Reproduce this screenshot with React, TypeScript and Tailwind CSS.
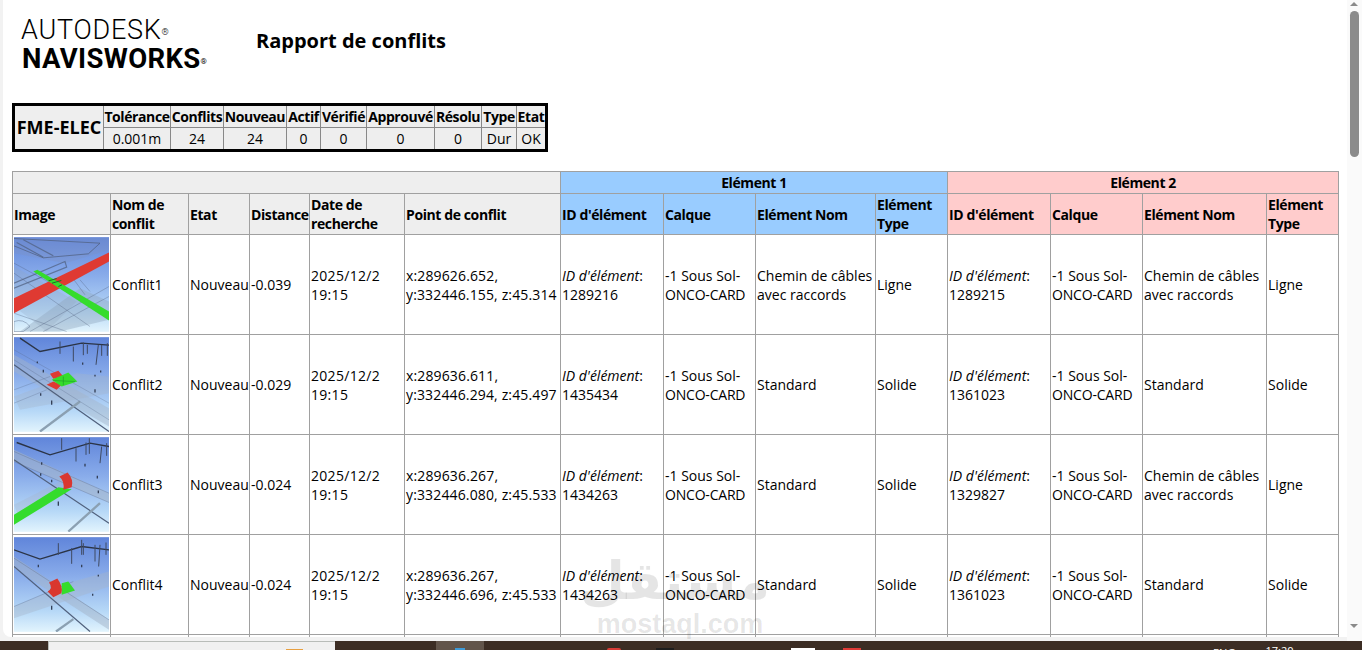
import React from 'react';

const summaryHeads = ['Tolérance', 'Conflits', 'Nouveau', 'Actif', 'Vérifié', 'Approuvé', 'Résolu', 'Type', 'Etat'];
const summaryVals = ['0.001m', '24', '24', '0', '0', '0', '0', 'Dur', 'OK'];
const summaryWidths = [67, 53, 63, 34, 46, 68, 47, 35, 30];

const colWidths = [98, 78, 61, 60, 95, 156, 103, 92, 120, 72, 103, 92, 124, 72];

const subHeads = ['ID d\'élément', 'Calque', 'Elément Nom'];

const rows = [
  {
    name: 'Conflit1', dist: '-0.039', coords: ['x:289626.652,', 'y:332446.155, z:45.314'],
    a: { id: '1289216', nom: ['Chemin de câbles', 'avec raccords'], type: 'Ligne' },
    b: { id: '1289215', nom: ['Chemin de câbles', 'avec raccords'], type: 'Ligne' },
  },
  {
    name: 'Conflit2', dist: '-0.029', coords: ['x:289636.611,', 'y:332446.294, z:45.497'],
    a: { id: '1435434', nom: ['Standard'], type: 'Solide' },
    b: { id: '1361023', nom: ['Standard'], type: 'Solide' },
  },
  {
    name: 'Conflit3', dist: '-0.024', coords: ['x:289636.267,', 'y:332446.080, z:45.533'],
    a: { id: '1434263', nom: ['Standard'], type: 'Solide' },
    b: { id: '1329827', nom: ['Chemin de câbles', 'avec raccords'], type: 'Ligne' },
  },
  {
    name: 'Conflit4', dist: '-0.024', coords: ['x:289636.267,', 'y:332446.696, z:45.533'],
    a: { id: '1434263', nom: ['Standard'], type: 'Solide' },
    b: { id: '1361023', nom: ['Standard'], type: 'Solide' },
  },
];

const Thumb = ({ view, children }: { view: string; children: React.ReactNode }) => {
  const [x, y, w, h] = view.split(' ').map(Number);
  return (
    <svg viewBox={view} width={95} height={95} className="block">
      <defs>
        <linearGradient id="sky" x1="0" y1="0" x2="0" y2="1">
          <stop offset="0" stopColor="#6085da" />
          <stop offset="0.4" stopColor="#88abea" />
          <stop offset="0.78" stopColor="#b6d8f7" />
          <stop offset="1" stopColor="#e2f4fd" />
        </linearGradient>
      </defs>
      <rect x={x} y={y} width={w} height={h} fill="url(#sky)" />
      {children}
    </svg>
  );
};

const Conflict1 = () => (
  <Thumb view="42 22 285 284">
    <path d="M42 24 H327 V60 L195 100 L42 70 Z" fill="#7e93c4" fillOpacity="0.35" />
    <path d="M60 305 L240 175 L327 215 L327 270 L180 305 Z" fill="#8ea4bc" fillOpacity="0.4" />
    <path d="M42 110 L230 215 L140 305 L42 230 Z" fill="#8ea4bc" fillOpacity="0.25" />
    <g fill="none" stroke="#4f5e7c" strokeOpacity="0.7">
      <path d="M42 26 L300 40 L265 72 L130 84 L42 48" strokeWidth="3" />
      <path d="M50 38 L130 82 M70 30 L160 78 M42 160 L195 95 L200 112 L42 175" strokeWidth="3.5" />
      <path d="M42 100 L300 240 M42 130 L270 290 M90 305 L327 170 M130 305 L327 200 M240 150 L270 185 M222 150 L255 195 M42 250 L200 305" strokeWidth="2" strokeOpacity="0.5" />
      <path d="M42 275 Q70 265 90 290 L70 305 L42 305 Z" strokeWidth="2" strokeOpacity="0.6" />
    </g>
    <path d="M42 205 L327 68 L327 95 L42 250 Z" fill="#df3a32" />
    <path d="M100 125 L112 120 L327 245 L327 272 Z" fill="#35dc2c" />
    <path d="M146 153 L170 146 M156 160 L184 152 M175 170 L186 165" stroke="#1c6e2a" strokeWidth="3" />
  </Thumb>
);

const Conflict2 = () => (
  <Thumb view="42 322 285 284">
    <path d="M42 375 L327 535 L327 590 L42 425 Z" fill="#a4b4c8" fillOpacity="0.45" />
    <path d="M42 500 L230 430 L327 440 L327 490 L60 540 Z" fill="#a4b4c8" fillOpacity="0.35" />
    <g fill="none">
      <path d="M42 405 L327 605" stroke="#50607c" strokeWidth="3.5" />
      <path d="M120 605 L240 515" stroke="#8ba0b2" strokeWidth="7" />
      <path d="M42 360 L327 520 M42 390 L327 570 M42 480 L150 440 M42 520 L140 480" stroke="#4f5e7c" strokeOpacity="0.4" strokeWidth="2" />
      <path d="M60 325 L120 365 L245 340 L327 346" stroke="#2b3446" strokeWidth="4" />
      <path d="M180 335 V372 M220 350 V395 M250 338 V376 M262 345 V372 M295 345 L288 405 M305 345 V378 M322 340 V378" stroke="#3f4a62" strokeWidth="3" />
      <path d="M130 420 V428 M155 512 V525 M122 490 V498 M285 478 V488 M248 398 V405 M285 435 V440 M302 422 V428 M112 395 V400" stroke="#333f57" strokeWidth="4" />
    </g>
    <path d="M150 432 L175 423 L190 440 L160 447 Z M140 465 L160 455 L185 465 L170 480 Z" fill="#df3a32" />
    <path d="M155 450 L205 428 L232 455 L185 470 Z" fill="#35dc2c" />
    <path d="M160 452 L225 455 M190 440 L190 466" stroke="#198a28" strokeWidth="1.5" />
  </Thumb>
);

const Conflict3 = () => (
  <Thumb view="42 22 285 284">
    <path d="M42 60 L327 190 L327 218 L42 95 Z" fill="#a4b4c8" fillOpacity="0.55" />
    <path d="M42 225 L190 150 L230 165 L60 270 Z" fill="#a4b4c8" fillOpacity="0.3" />
    <g fill="none">
      <path d="M42 90 L327 280" stroke="#50607c" strokeWidth="3.5" />
      <path d="M205 305 L300 220" stroke="#8ba0b2" strokeWidth="7" />
      <path d="M42 65 L327 190 M42 95 L327 218" stroke="#4f5e7c" strokeOpacity="0.45" strokeWidth="2" />
      <path d="M50 38 L150 75 L270 40 L327 50" stroke="#2b3446" strokeWidth="4" />
      <path d="M185 25 V60 M228 55 V95 M258 38 V75 M268 25 V72 M305 50 L300 100 M320 40 V78" stroke="#3f4a62" strokeWidth="3" />
      <path d="M125 97 V105 M122 130 V138 M155 150 V157 M175 215 V228 M292 138 V146 M295 182 V190 M255 102 V110" stroke="#333f57" strokeWidth="4" />
    </g>
    <path d="M42 255 L175 172 L215 178 L42 285 Z" fill="#35dc2c" />
    <path d="M178 140 L203 128 Q222 150 215 172 L190 180 Q195 155 178 140 Z" fill="#d9372f" />
  </Thumb>
);

const Conflict4 = () => (
  <Thumb view="42 322 285 284">
    <path d="M42 380 L327 570 L327 600 L42 415 Z" fill="#a4b4c8" fillOpacity="0.5" />
    <path d="M42 530 L220 455 L327 425 L327 470 L42 565 Z" fill="#a4b4c8" fillOpacity="0.4" />
    <g fill="none">
      <path d="M42 410 L270 605" stroke="#50607c" strokeWidth="3.5" />
      <path d="M168 605 L220 568" stroke="#8ba0b2" strokeWidth="7" />
      <path d="M42 385 L327 570 M42 530 L220 455" stroke="#4f5e7c" strokeOpacity="0.45" strokeWidth="2" />
      <path d="M42 360 L120 388 L245 350 L327 360" stroke="#2b3446" strokeWidth="4" />
      <path d="M175 340 V375 M215 355 V402 M250 340 V375 M285 345 V395 M300 345 L296 410 M318 338 V375 M245 330 V375" stroke="#3f4a62" strokeWidth="3" />
      <path d="M115 405 V412 M155 528 V540 M295 435 V440 M278 492 V498 M245 405 V412" stroke="#333f57" strokeWidth="4" />
    </g>
    <path d="M185 460 L205 455 L225 482 L185 495 Z" fill="#35dc2c" />
    <path d="M147 458 L172 446 Q190 470 184 490 L160 502 L143 485 Q160 475 147 458 Z" fill="#d9372f" />
  </Thumb>
);

const thumbs = [Conflict1, Conflict2, Conflict3, Conflict4];

const Line = ({ lines }: { lines: string[] }) => (
  <>
    {lines.map((l) => (
      <div key={l}>{l}</div>
    ))}
  </>
);

const cell = 'border border-[#a0a0a0] px-[1px] py-0 align-middle text-left font-normal';
const head = 'border border-[#a0a0a0] px-[1px] py-0 align-middle text-left font-bold tracking-[-0.4px]';

const ElementCells = ({ el }: { el: { id: string; nom: string[]; type: string } }) => (
  <>
    <td className={cell}>
      <div><i>ID d'élément</i>:</div>
      <div>{el.id}</div>
    </td>
    <td className={cell}>
      <div>-1 Sous Sol-</div>
      <div className="tracking-[-0.2px]">ONCO-CARD</div>
    </td>
    <td className={cell}><Line lines={el.nom} /></td>
    <td className={cell}>{el.type}</td>
  </>
);

const Report = () => (
  <div className="h-full overflow-hidden">
    <div className="flex h-[103px] items-start">
      <div className="ml-[18px] mt-[16px] w-[235px] text-black">
        <div className="font-['Roboto',sans-serif] text-[27px] font-light leading-[28px] tracking-[0.75px]">AUTODESK<sup className="text-[9px]">®</sup></div>
        <div className="ml-[1px] font-['Roboto',sans-serif] text-[27.5px] font-bold leading-[30px] tracking-[0.35px]">NAVISWORKS<sup className="text-[8px] font-normal">®</sup></div>
      </div>
      <h1 className="mt-[27px] text-[20px] font-bold leading-[28px] text-black">Rapport de conflits</h1>
    </div>

    <table className="ml-[9px] w-[533px] table-fixed border-collapse border-[3px] border-black bg-[#eeeeee] text-[14px] leading-[19px] text-black">
      <colgroup>
        <col className="w-[90px]" />
        {summaryWidths.map((w, i) => (
          <col key={i} style={{ width: w }} />
        ))}
      </colgroup>
      <tbody>
        <tr className="h-[23px]">
          <th rowSpan={2} className="overflow-hidden whitespace-nowrap border border-[#888888] p-0 text-center text-[18px] font-bold">FME-ELEC</th>
          {summaryHeads.map((h) => (
            <th key={h} className="border border-[#888888] p-0 text-center font-bold tracking-[-0.4px]">{h}</th>
          ))}
        </tr>
        <tr className="h-[23px]">
          {summaryVals.map((v, i) => (
            <td key={i} className="border border-[#888888] p-0 text-center">{v}</td>
          ))}
        </tr>
      </tbody>
    </table>

    <table className="ml-[9px] mt-[19px] w-[1327px] table-fixed border-collapse text-[14px] leading-[19px] text-black">
      <colgroup>
        {colWidths.map((w, i) => (
          <col key={i} style={{ width: w }} />
        ))}
      </colgroup>
      <thead>
        <tr className="h-[22px]">
          <th colSpan={6} className={`${head} bg-[#eeeeee]`} />
          <th colSpan={4} className={`${head} bg-[#99ccff] text-center!`}>Elément 1</th>
          <th colSpan={4} className={`${head} bg-[#ffcccc] text-center!`}>Elément 2</th>
        </tr>
        <tr className="h-[41px]">
          <th className={`${head} bg-[#eeeeee]`}>Image</th>
          <th className={`${head} bg-[#eeeeee]`}>Nom de conflit</th>
          <th className={`${head} bg-[#eeeeee]`}>Etat</th>
          <th className={`${head} bg-[#eeeeee]`}>Distance</th>
          <th className={`${head} bg-[#eeeeee]`}>Date de recherche</th>
          <th className={`${head} bg-[#eeeeee]`}>Point de conflit</th>
          {subHeads.map((h) => (
            <th key={h} className={`${head} bg-[#99ccff]`}>{h}</th>
          ))}
          <th className={`${head} bg-[#99ccff]`}>Elément Type</th>
          {subHeads.map((h) => (
            <th key={h} className={`${head} bg-[#ffcccc]`}>{h}</th>
          ))}
          <th className={`${head} bg-[#ffcccc]`}>Elément Type</th>
        </tr>
      </thead>
      <tbody>
        {rows.map((r, i) => {
          const Pic = thumbs[i];
          return (
            <tr key={r.name} className="h-[100px]">
              <td className={cell}><Pic /></td>
              <td className={cell}>{r.name}</td>
              <td className={cell}>Nouveau</td>
              <td className={cell}>{r.dist}</td>
              <td className={`${cell} tracking-[0.3px]`}>
                <div>2025/12/2</div>
                <div>19:15</div>
              </td>
              <td className={`${cell} tracking-[0.14px]`}><Line lines={r.coords} /></td>
              <ElementCells el={r.a} />
              <ElementCells el={r.b} />
            </tr>
          );
        })}
        <tr className="h-[100px]">
          {colWidths.map((_, i) => (
            <td key={i} className={cell} />
          ))}
        </tr>
      </tbody>
    </table>
  </div>
);

const Scrollbar = () => (
  <div className="flex w-[15px] flex-col items-center bg-[#fafafa] pb-[12px] pr-[1px]">
    <svg width="10" height="6" viewBox="0 0 10 6" className="mt-[1px]"><path d="M5 1 L9 5 H1 Z" fill="#8a8a8a" /></svg>
    <div className="mt-[4px] h-[146px] w-[9px] rounded-full bg-[#8b8b8b]" />
    <div className="flex-1" />
    <svg width="10" height="6" viewBox="0 0 10 6"><path d="M5 5 L9 1 H1 Z" fill="#8a8a8a" /></svg>
  </div>
);

const Taskbar = () => (
  <div className="flex h-[9px] items-start overflow-hidden bg-[#3c2d24] text-[11px] leading-[14px] text-white">
    <div className="ml-[48px] flex h-full w-[287px] justify-end border-l border-t border-[#b8bcb8] bg-[#f0f0f0] pr-[32px] pt-[7px]">
      <div className="h-[1px] w-[17px] bg-[#e8a040]" />
    </div>
    <div className="ml-[101px] flex h-full w-[48px] justify-center bg-[#62554b] pt-[7px]">
      <div className="h-[2px] w-[10px] bg-[#3f9bd8]" />
    </div>
    <div className="ml-[123px] mt-[7px] h-[2px] w-[14px] rounded-t bg-[#d83b36]" />
    <div className="ml-[35px] mt-[7px] h-[2px] w-[18px] bg-[#1d1d1d]" />
    <div className="ml-[117px] mt-[7px] h-[2px] w-[24px] bg-white" />
    <div className="ml-[28px] mt-[7px] h-[2px] w-[18px] bg-[#e03a36]" />
    <span className="ml-[352px] mt-[5px]">ENG</span>
    <span className="ml-[30px] mt-[3px]">17:20</span>
  </div>
);

export default function App() {
  return (
    <div className="relative flex h-[650px] w-[1362px] flex-col overflow-hidden bg-[#f2f2f2] font-['Open_Sans',sans-serif]">
      <div className="flex min-h-0 flex-1">
        <div className="mb-[4px] ml-[3px] min-w-0 flex-1 overflow-hidden rounded-bl-lg bg-white">
          <Report />
        </div>
        <Scrollbar />
      </div>
      <Taskbar />
      <div className="pointer-events-none absolute left-[590px] top-[552px] w-[180px] text-center text-[#000000]/10">
        <div dir="rtl" className="font-['DejaVu_Sans',sans-serif] text-[52px] font-bold leading-[58px]">مستقل</div>
        <div className="font-['Liberation_Sans',sans-serif] text-[27px] font-bold leading-[28px]">mostaql.com</div>
      </div>
    </div>
  );
}
